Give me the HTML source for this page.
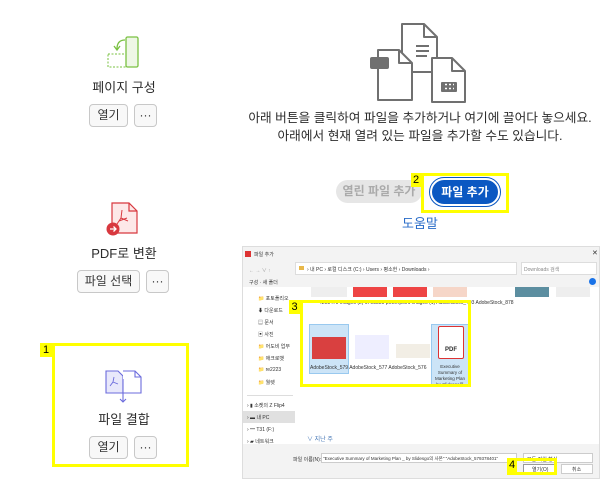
<!DOCTYPE html>
<html><head><meta charset="utf-8"><style>
*{margin:0;padding:0;box-sizing:border-box}
body{width:600px;height:483px;background:#fff;position:relative;overflow:hidden;font-family:"Liberation Sans","Noto Sans CJK KR",sans-serif;color:#2c2c2c}
.a{position:absolute}
.t{font-size:13px;text-align:center;white-space:nowrap}
.b{position:absolute;height:23px;border:1px solid #c8c8c8;border-radius:4px;background:#f8f8f8;font-size:12px;text-align:center;line-height:21px;color:#333}
.y{position:absolute;border:3px solid #ffff00}
.yl{position:absolute;background:#ffff00;font-size:11px;line-height:14px;text-align:center;color:#000}
.s{font-size:5px;color:#333;position:absolute;white-space:nowrap}
</style></head><body>
<svg class="a" style="left:106px;top:36px" width="36" height="34" viewBox="0 0 36 34"><rect x="20" y="1" width="12" height="30" rx="1.5" fill="#eef7e6" stroke="#7ac142" stroke-width="1.3"/><rect x="2" y="18" width="18" height="13" fill="none" stroke="#7ac142" stroke-width="1" stroke-dasharray="2 1.5"/><path d="M19 4 Q11 4 11 13" fill="none" stroke="#7ac142" stroke-width="1.3"/><path d="M8 10 L11 14 L14 10" fill="none" stroke="#7ac142" stroke-width="1.3"/></svg>
<div class="a t" style="left:64px;top:77px;width:120px">페이지 구성</div>
<div class="b" style="left:89px;top:104px;width:39px">열기</div>
<div class="b" style="left:134px;top:104px;width:23px">···</div>
<svg class="a" style="left:104px;top:202px" width="36" height="36" viewBox="0 0 36 36"><path d="M8 1 H25 L33 9 V31 H8 Z" fill="#fde8e8" stroke="#d8383f" stroke-width="1.2"/><path d="M25 1 V9 H33" fill="none" stroke="#d8383f" stroke-width="1.2"/><path d="M18 8 L17 16 L13 22 M17 16 L24 19 M15 19 L23 16" fill="none" stroke="#d8383f" stroke-width="1"/><circle cx="9" cy="27" r="6.5" fill="#d8383f"/><path d="M6 27 H12 M9.5 24.5 L12 27 L9.5 29.5" stroke="#fff" stroke-width="1.3" fill="none"/></svg>
<div class="a t" style="left:64px;top:243px;width:120px">PDF로 변환</div>
<div class="b" style="left:77px;top:270px;width:63px">파일 선택</div>
<div class="b" style="left:146px;top:270px;width:23px">···</div>
<div class="y" style="left:52px;top:343px;width:137px;height:124px"></div>
<div class="yl" style="left:40px;top:343px;width:12px">1</div>
<svg class="a" style="left:104px;top:369px" width="40" height="34" viewBox="0 0 40 34"><path d="M2 2 H14 L19 7 V24 H2 Z" fill="#e8e8fb" stroke="#6b6bdc" stroke-width="1.1"/><path d="M19 2 H31 L37 8 V24 H19" fill="#fff" stroke="#6b6bdc" stroke-width="1.1"/><path d="M31 2 V8 H37" fill="none" stroke="#6b6bdc" stroke-width="1.1"/><path d="M10 8 L9 13 L6 17 M9 13 L14 15" stroke="#6b6bdc" fill="none" stroke-width="0.9"/><path d="M19 10 V33 M16 30 L19 33 L22 30" stroke="#6b6bdc" fill="none" stroke-width="1.1"/></svg>
<div class="a t" style="left:64px;top:409px;width:120px">파일 결합</div>
<div class="b" style="left:89px;top:436px;width:39px">열기</div>
<div class="b" style="left:134px;top:436px;width:23px">···</div>
<svg class="a" style="left:366px;top:20px" width="104" height="84" viewBox="0 0 104 84"><g fill="#fff" stroke="#707070" stroke-width="2" stroke-linejoin="round"><path d="M36 4 H58 L71 17 V52 H36 Z"/><path d="M58 4 V17 H71" fill="none"/><path d="M12 30 H33 L46 43 V80 H12 Z"/><path d="M33 30 V43 H46" fill="none"/><path d="M66 38 H86 L99 51 V82 H66 Z"/><path d="M86 38 V51 H99" fill="none"/></g><rect x="4" y="37" width="19" height="12" rx="2" fill="#707070"/><path d="M50 26 H63 M50 31 H63 M50 36 H61 M48 52 H56" stroke="#707070" stroke-width="2"/><rect x="75" y="62" width="16" height="10" rx="1" fill="#707070"/><path d="M79 64.5 h2 m2 0 h2 m2 0h1 M79 68.5 h2 m2 0 h2 m2 0h1" stroke="#fff" stroke-width="1.6"/></svg>
<div class="a t" style="left:240px;top:109px;width:360px;line-height:18px;font-size:12.7px">아래 버튼을 클릭하여 파일을 추가하거나 여기에 끌어다 놓으세요.<br>아래에서 현재 열려 있는 파일을 추가할 수도 있습니다.</div>
<div class="a" style="left:336px;top:180px;width:86px;height:23px;border-radius:12px;background:#e6e6e6;color:#aaa;font-size:12px;line-height:23px;text-align:center;font-weight:bold">열린 파일 추가</div>
<div class="a" style="left:430px;top:178px;width:70px;height:28px;border-radius:14px;background:#0b58c2;border:2px solid #fff;outline:1.5px solid #0b58c2;color:#fff;font-size:12px;line-height:24px;text-align:center;font-weight:bold">파일 추가</div>
<div class="y" style="left:421px;top:173px;width:88px;height:40px"></div>
<div class="yl" style="left:411px;top:173px;width:10px">2</div>
<div class="a" style="left:402px;top:213px;font-size:13px;color:#2a6cc8">도움말</div>
<div class="a" style="left:242px;top:246px;width:358px;height:233px;background:#f3f3f3;border:1px solid #ddd;overflow:hidden">
 <div class="a" style="left:2px;top:4px;width:6px;height:6px;background:#d33"></div>
 <div class="s" style="left:11px;top:4px">파일 추가</div>
 <div class="s" style="left:349px;top:2px;font-size:7px">✕</div>
 <div class="s" style="left:6px;top:20px;color:#999">←  →  ∨  ↑</div>
 <div class="a" style="left:52px;top:15px;width:222px;height:13px;background:#fff;border:1px solid #ddd"></div>
 <div class="a" style="left:56px;top:19px;width:5px;height:4px;background:#e8b84a"></div>
 <div class="s" style="left:64px;top:19px">› 내 PC › 로컬 디스크 (C:) › Users › 평소헌 › Downloads ›</div>
 <div class="a" style="left:278px;top:15px;width:76px;height:13px;background:#fff;border:1px solid #ddd"></div>
 <div class="s" style="left:281px;top:19px;color:#888">Downloads 검색</div>
 <div class="s" style="left:6px;top:32px">구성 ·   새 폴더</div>
 <div class="a" style="left:346px;top:31px;width:7px;height:7px;border-radius:4px;background:#1a73e8"></div>
 <div class="a" style="left:54px;top:40px;width:304px;height:157px;background:#fff"></div>
 <div class="a" style="left:0;top:40px;width:54px;height:157px;background:#fff"></div>
 <div class="s" style="left:15px;top:48px">📁 포토폴리오</div>
 <div class="s" style="left:15px;top:60px">⬇ 다운로드</div>
 <div class="s" style="left:15px;top:72px">▤ 문서</div>
 <div class="s" style="left:15px;top:84px">▣ 사진</div>
 <div class="s" style="left:15px;top:96px">📁 어도비 업무</div>
 <div class="s" style="left:15px;top:108px">📁 애크로뱃</div>
 <div class="s" style="left:15px;top:120px">📁 re2223</div>
 <div class="s" style="left:15px;top:132px">📁 월렛</div>
 <div class="a" style="left:4px;top:148px;width:46px;height:1px;background:#ddd"></div>
 <div class="s" style="left:4px;top:155px">›  ▮ 소켓의 Z Flip4</div>
 <div class="a" style="left:0;top:164px;width:52px;height:12px;background:#e0e0e0"></div>
 <div class="s" style="left:4px;top:167px">›  ▬ 내 PC</div>
 <div class="s" style="left:4px;top:179px">›  ━ T31 (F:)</div>
 <div class="s" style="left:4px;top:191px">›  ▰ 네트워크</div>
 <div class="a" style="left:68px;top:40px;width:36px;height:10px;background:#eee"></div>
 <div class="a" style="left:110px;top:40px;width:34px;height:10px;background:#e44"></div>
 <div class="a" style="left:150px;top:40px;width:34px;height:10px;background:#e44"></div>
 <div class="a" style="left:190px;top:40px;width:34px;height:10px;background:#f6d6c8"></div>
 <div class="a" style="left:272px;top:40px;width:34px;height:10px;background:#5c8ea0"></div>
 <div class="a" style="left:313px;top:40px;width:34px;height:10px;background:#eee"></div>
 <div class="s" style="left:76px;top:53px">4208479     images (2)     9798851     powerpoint     images (1)    AdobeStock_493   AdobeStock_878</div>
 <div class="a" style="left:66px;top:77px;width:40px;height:50px;background:#cce4f7;border:1px solid #99c9ef"></div>
 <div class="a" style="left:69px;top:90px;width:34px;height:22px;background:#d94040"></div>
 <div class="a" style="left:112px;top:88px;width:34px;height:24px;background:#eef"></div>
 <div class="a" style="left:153px;top:97px;width:34px;height:14px;background:#f2eee5"></div>
 <div class="a" style="left:188px;top:77px;width:40px;height:62px;background:#cce4f7;border:1px solid #99c9ef"></div>
 <div class="a" style="left:195px;top:79px;width:26px;height:33px;background:#fff;border:1.5px solid #d33;border-radius:2px;font-size:6px;text-align:center;padding-top:20px;font-weight:bold">PDF</div>
 <div class="s" style="left:67px;top:118px">AdobeStock_579  AdobeStock_577  AdobeStock_576</div>
 <div class="s" style="left:192px;top:117px;font-size:4.5px;line-height:6px;text-align:center">Executive<br>Summary of<br>Marketing Plan<br>by Slidesgo의</div>
 <div class="s" style="left:64px;top:187px;color:#4a7ab8;font-size:6px">∨ 지난 주</div>
 <div class="s" style="left:50px;top:209px">파일 이름(N):</div>
 <div class="a" style="left:78px;top:206px;width:196px;height:10px;background:#fff;border:1px solid #ccc"></div>
 <div class="s" style="left:80px;top:209px;font-size:4.5px">"Executive Summary of Marketing Plan _ by Slidesgo의 사본" "AdobeStock_579378401"</div>
 <div class="a" style="left:280px;top:206px;width:70px;height:10px;background:#fff;border:1px solid #ccc"></div>
 <div class="s" style="left:284px;top:209px">모든 지원 형식</div>
 <div class="a" style="left:280px;top:217px;width:32px;height:10px;background:#fff;border:1px solid #999"></div>
 <div class="a" style="left:318px;top:217px;width:32px;height:10px;background:#fff;border:1px solid #ccc"></div>
 <div class="s" style="left:289px;top:219px">열기(O)</div>
 <div class="s" style="left:329px;top:219px">취소</div>
</div>
<div class="y" style="left:300px;top:300px;width:171px;height:87px"></div>
<div class="yl" style="left:289px;top:300px;width:11px">3</div>
<div class="y" style="left:507px;top:458px;width:50px;height:17px"></div>
<div class="yl" style="left:507px;top:458px;width:10px">4</div>
</body></html>
